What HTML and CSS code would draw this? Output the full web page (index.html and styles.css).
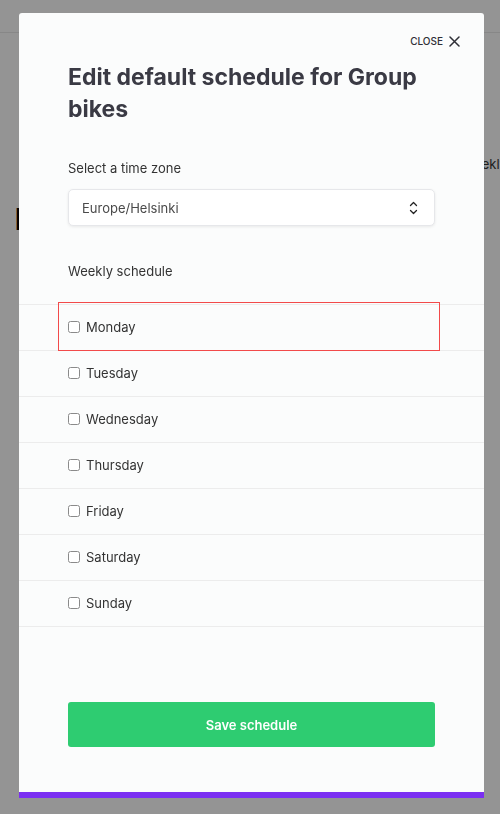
FILE: index.html
```html
<!DOCTYPE html>
<html>
<head>
<meta charset="utf-8">
<link rel="stylesheet" href="styles.css">
</head>
<body>
<div class="page">
  <header class="page-header"></header>
  <p class="page-side">Weekly</p>
  <h1 class="page-title">I</h1>
</div>
<div class="overlay"></div>
<div class="modal">
  <div class="close-row">
    <button class="close-btn">
      <span>CLOSE</span>
      <svg width="11" height="11" viewBox="0 0 11 11"><path d="M1 1 L10 10 M10 1 L1 10" stroke="#2f2f36" stroke-width="1.5" fill="none" stroke-linecap="round"/></svg>
    </button>
  </div>
  <div class="content">
    <h2 class="title">Edit default schedule for Group bikes</h2>
    <label class="field-label">Select a time zone</label>
    <div class="select">
      <span>Europe/Helsinki</span>
      <svg width="9" height="14" viewBox="0 0 9 14"><path d="M1.5 4.5 L4.5 1.5 L7.5 4.5 M1.5 9.5 L4.5 12.5 L7.5 9.5" stroke="#222" stroke-width="1.3" fill="none" stroke-linecap="round" stroke-linejoin="round"/></svg>
    </div>
    <div class="section-label">Weekly schedule</div>
  </div>
  <ul class="days">
    <li class="day"><span class="box"></span>Monday<span class="highlight"></span></li>
    <li class="day"><span class="box"></span>Tuesday</li>
    <li class="day"><span class="box"></span>Wednesday</li>
    <li class="day"><span class="box"></span>Thursday</li>
    <li class="day"><span class="box"></span>Friday</li>
    <li class="day"><span class="box"></span>Saturday</li>
    <li class="day"><span class="box"></span>Sunday</li>
  </ul>
  <div class="actions">
    <button class="save">Save schedule</button>
  </div>
</div>
</body>
</html>
```
FILE: styles.css
```css
* { box-sizing: border-box; }
html, body {
  margin: 0;
  padding: 0;
  height: 814px;
  overflow: hidden;
  font-family: Inter, "Noto Sans", sans-serif;
  background: #ffffff;
}
.page {
  height: 814px;
  background: #fff;
}
.page-header {
  height: 33px;
  border-bottom: 1px solid #e8e8e8;
}
.page-side {
  margin: 121px 0 0 462px;
  font-size: 13px;
  line-height: 20px;
  color: #333;
  white-space: nowrap;
}
.page-title {
  margin: 28px 0 0 15px;
  font-size: 30px;
  line-height: 34px;
  font-weight: 800;
  color: #000;
}
.overlay {
  position: fixed;
  inset: 0;
  background: rgba(0, 0, 0, 0.42);
}
.modal {
  position: fixed;
  left: 19px;
  top: 13px;
  width: 465px;
  height: 785px;
  background: #fbfcfc;
  border-radius: 3px 3px 0 0;
  border-bottom: 6px solid #7b2ff2;
  display: flex;
  flex-direction: column;
}
.close-row {
  display: flex;
  justify-content: flex-end;
  padding: 20px 24px 0 0;
  height: 36px;
}
.close-btn {
  display: flex;
  align-items: center;
  gap: 6px;
  border: 0;
  background: none;
  padding: 0;
  height: 16px;
  font-family: inherit;
  font-size: 10px;
  font-weight: 500;
  letter-spacing: 0;
  color: #2f2f36;
}
.content {
  padding: 0 49px;
}
.title {
  margin: 12px 0 0;
  font-size: 23px;
  line-height: 32px;
  font-weight: 700;
  color: #3a3a44;
}
.field-label {
  display: block;
  margin-top: 33px;
  font-size: 13px;
  line-height: 20px;
  color: #333;
}
.select {
  margin-top: 11px;
  height: 37px;
  background: #fff;
  border: 1px solid #e6e7ea;
  border-radius: 5px;
  box-shadow: 0 1px 3px rgba(0, 0, 0, 0.08);
  display: flex;
  align-items: center;
  justify-content: space-between;
  padding: 0 16px 0 13px;
  font-size: 13px;
  color: #4a4a4a;
}
.section-label {
  margin-top: 35px;
  font-size: 13px;
  line-height: 20px;
  color: #333;
}
.days {
  list-style: none;
  margin: 23px 0 0;
  padding: 0;
  border-top: 1px solid #ececec;
}
.day {
  position: relative;
  height: 46px;
  border-bottom: 1px solid #ececec;
  display: flex;
  align-items: center;
  padding: 0 0 2px 49px;
  font-size: 13px;
  color: #333;
}
.box {
  width: 12px;
  height: 12px;
  border: 1px solid #8a8a8a;
  border-radius: 2.5px;
  background: #fff;
  margin-right: 6px;
}
.highlight {
  position: absolute;
  left: 39px;
  top: -3px;
  width: 382px;
  height: 49px;
  border: 1px solid #f24a4a;
  pointer-events: none;
}
.actions {
  padding: 75px 49px 0;
}
.save {
  width: 100%;
  height: 45px;
  border: 0;
  border-radius: 3px;
  background: #2ecc71;
  color: #fff;
  font-family: inherit;
  font-size: 13px;
  font-weight: 600;
}
```
